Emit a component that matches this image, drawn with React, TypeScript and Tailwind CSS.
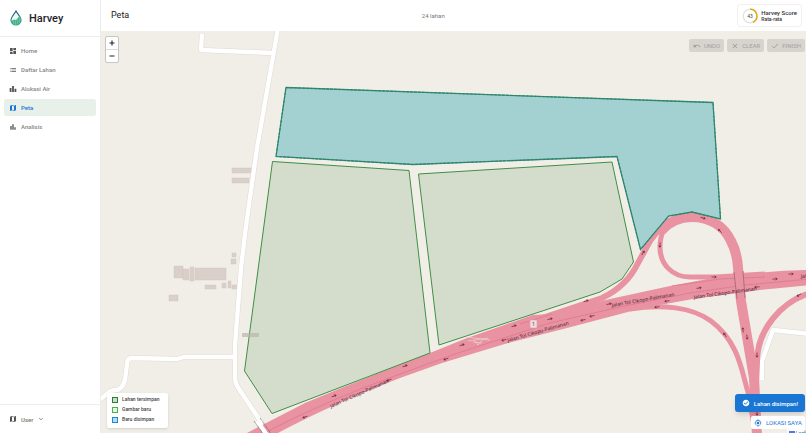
import type { ComponentType } from 'react';
import {
  MdBarChart,
  MdCheck,
  MdCheckCircle,
  MdClose,
  MdDashboard,
  MdExpandMore,
  MdLeaderboard,
  MdList,
  MdMap,
  MdMyLocation,
  MdUndo,
} from 'react-icons/md';

type Icon = ComponentType<{ className?: string }>;

const navItems: { label: string; icon: Icon; active?: boolean }[] = [
  { label: 'Home', icon: MdDashboard },
  { label: 'Daftar Lahan', icon: MdList },
  { label: 'Alokasi Air', icon: MdLeaderboard },
  { label: 'Peta', icon: MdMap, active: true },
  { label: 'Analisis', icon: MdBarChart },
];

const tools: { label: string; icon: Icon }[] = [
  { label: 'UNDO', icon: MdUndo },
  { label: 'CLEAR', icon: MdClose },
  { label: 'FINISH', icon: MdCheck },
];

const legend = [
  { label: 'Lahan tersimpan', swatch: 'border-solid border-[#2e7d32] bg-[#c3dfc5]' },
  { label: 'Gambar baru', swatch: 'border-dashed border-[#4caf50] bg-[#e6f5e7]' },
  { label: 'Baru disimpan', swatch: 'border-dashed border-[#1e88d2] bg-[#b5def8]' },
];

// Direction arrows along the motorway: x, y, angle in degrees
const arrows = [
  [334, 396, -21], [305, 417, 159], [405, 366, -20], [389, 380, 159], [446, 359, 163],
  [462, 345, -17], [514, 326, -17], [504, 340, 165], [550, 319, -14], [586, 301, -17],
  [583, 320, 168], [592, 316, 168], [609, 304, -12], [643, 253, -58], [660, 245, 95],
  [703, 218, 14], [720, 231, 225], [714, 277, 0], [699, 288, -9], [667, 301, 172],
  [657, 307, 172], [757, 287, 176], [775, 279, -4], [791, 274, -2], [799, 295, 150],
  [743, 330, 264], [747, 337, 84], [757, 355, 92], [725, 335, 235], [757, 413, 90],
];

const roadLabels = [
  [331, 408, -24], [508, 342, -16], [612, 307, -10], [694, 299, -8], [801, 278, -3],
];

const buildings = [
  [232, 168, 20, 5], [232, 178, 17, 5], [232, 253, 4, 4], [231, 259, 5, 5],
  [174, 266, 9, 12], [183, 269, 6, 11], [190, 267, 4, 14], [195, 268, 31, 12],
  [205, 285, 11, 4], [222, 283, 4, 5], [228, 281, 3, 7], [232, 285, 5, 4],
  [169, 295, 9, 6],
];

const localRoads = [
  'M278 28 L257 148 L246 226 L241 268 L235 345 L235 378 Q235 383 239 389 L269 434',
  'M202 34 L201 50 L273 53',
  'M234 357 L184 357 L177 359 L132 358 Q127 358 127 364 L125 380 Q122 390 116 390 Q111 390 107 394 L97 402',
  'M762 380 L762 361 L773 330 L810 334',
];

const ramps = [
  { d: 'M470 341 L536 320 L602 298 Q627 286 638 263 L650 241 Q660 227 670 220', w: 6 },
  { d: 'M674 218 Q660 228 660 247 C660 264 672 277 690 277 L716 277 L765 274', w: 5 },
  { d: 'M661 231 Q673 217 692 217 C710 217 724 226 731 241 Q737 252 738 268 L741 301 L754 378 L757 436', w: 10 },
  { d: 'M630 309 C662 304 692 307 711 321 C740 343 742 374 748 392 L756 436', w: 5 },
  { d: 'M810 293 C781 302 757 330 757 362 L755 395', w: 6 },
];

function Logo() {
  return (
    <svg viewBox="0 0 24 32" className="h-4 w-3" aria-hidden="true">
      <defs>
        <linearGradient id="drop" x1="0" y1="0" x2="0" y2="1">
          <stop offset="0" stopColor="#24507f" />
          <stop offset="1" stopColor="#24a47a" />
        </linearGradient>
      </defs>
      <path d="M12 2 C9 8 2 14 2 20.5 A10 9.5 0 0 0 22 20.5 C22 14 15 8 12 2Z" fill="#eef8f6" stroke="url(#drop)" strokeWidth="2.2" />
      <path d="M3 22 L8 19 L12 20 L20 11 L21.5 18 Q22 30 12 30 Q4 29 3 22Z" fill="#45b18b" />
      <path d="M7 21 V27 M11 21 V29 M15 18 V28 M19 15 V25" stroke="#a5dcc8" strokeWidth="0.8" />
    </svg>
  );
}

function Sidebar() {
  return (
    <aside className="flex w-[101px] shrink-0 flex-col border-r border-[#ececec] bg-white">
      <div className="flex h-[37px] items-center gap-[7px] border-b border-[#ececec] px-[10px]">
        <Logo />
        <span className="text-[11px] font-medium leading-none text-[#1f2428]">Harvey</span>
      </div>
      <nav className="flex flex-1 flex-col gap-[2px] px-1 pt-[5px]">
        {navItems.map(({ label, icon: ItemIcon, active }) => (
          <a
            key={label}
            href="#"
            aria-current={active ? 'page' : undefined}
            className={`flex h-[17px] items-center gap-1 rounded-[2px] px-[5px] text-[6px] font-medium ${
              active ? 'bg-[#e8f1e9] text-[#1976d2]' : 'text-[#858585]'
            }`}
          >
            <ItemIcon className={`size-2 ${active ? '' : 'text-[#555555]'}`} />
            {label}
          </a>
        ))}
      </nav>
      <div className="border-t border-[#ececec] px-1 pt-[6px] pb-[6px]">
        <button type="button" className="flex h-4 items-center gap-1 px-[5px] text-[6px] font-medium text-[#777777]">
          <MdMap className="size-2 text-[#555555]" />
          User
          <MdExpandMore className="size-2" />
        </button>
      </div>
    </aside>
  );
}

function Header() {
  return (
    <header className="flex h-[31px] shrink-0 items-center justify-between bg-white pr-1 pl-[10px]">
      <h1 className="text-[9px] font-normal text-[#222222]">Peta</h1>
      <span className="text-[6px] text-[#777777]">24 lahan</span>
      <div className="flex h-[23px] items-center gap-[3px] rounded-[3px] border border-[#f1f1f1] px-1">
        <svg viewBox="0 0 16 16" className="size-4" role="img" aria-label="43">
          <circle cx="8" cy="8" r="6.8" fill="none" stroke="#e3e3e3" strokeWidth="1.3" />
          <path d="M8 1.2 A6.8 6.8 0 0 1 10.9 14.2" fill="none" stroke="#e0ad15" strokeWidth="1.5" />
          <text x="8" y="9.7" textAnchor="middle" className="fill-[#444444] text-[5px]">43</text>
        </svg>
        <div className="flex flex-col text-[#333333]">
          <span className="text-[6px] font-medium leading-[7px]">Harvey Score</span>
          <span className="text-[5px] font-medium leading-[6px]">Rata-rata</span>
        </div>
      </div>
    </header>
  );
}

function MapCanvas() {
  return (
    <svg
      viewBox="101 31 705 402"
      preserveAspectRatio="xMinYMin slice"
      className="absolute inset-0 size-full bg-[#f1eee8]"
      role="img"
      aria-label="Peta lahan"
    >
      <g fill="#d9d0c9">
        {buildings.map(([x, y, w, h]) => (
          <rect key={`${x}-${y}`} x={x} y={y} width={w} height={h} stroke="#cfc4bc" strokeWidth="0.4" />
        ))}
      </g>
      <g fill="none" strokeLinejoin="round">
        {localRoads.map((d) => <path key={d} d={d} stroke="#dedad5" strokeWidth="5.4" />)}
        {localRoads.map((d) => <path key={d} d={d} stroke="#ffffff" strokeWidth="4.4" />)}
      </g>
      <g fill="none" stroke="#e892a2">
        {ramps.map(({ d, w }) => <path key={d} d={d} strokeWidth={w} />)}
      </g>
      <path
        d="M245 434 L305 403 Q360 380 430 353 L467 338 L533 315 L550 314 L610 299 L670 286 L713 278 Q760 271 810 270 L810 285 L760 290 L693 299 L643 308 L567 328 L508 343 L442 363 L400 378 Q330 405 276 434Z"
        fill="#e892a2"
      />
      <path
        d="M262 434 Q330 399 400 374 L455 354 L550 323 L620 307 L690 293 L745 285 L810 279 M672 286 L720 279 L765 277 M552 314 L520 324"
        fill="none"
        stroke="#dc6f88"
        strokeWidth="0.6"
      />
      <path d="M738 266 L741 301" fill="none" stroke="#e892a2" strokeWidth="9" />
      <path d="M734 272 L737 299 M743 271 L745 298" fill="none" stroke="#8c5361" strokeWidth="0.6" />
      <path d="M257 421 L267 435" stroke="#ffffff" strokeWidth="4.4" />
      <path d="M260 418 L272 435 M254 421 L264 435" stroke="#666666" strokeWidth="0.8" strokeDasharray="1 0.6" />

      <g strokeWidth="1">
        <path d="M272.5 161.5 L409 170.5 L430 353 L272 413.5 L244.5 371Z" fill="#2e7d32" fillOpacity="0.15" stroke="#3f8f45" />
        <path d="M418.5 174 L612 162 L633.5 262 L622 279 L600 292 L439 345Z" fill="#2e7d32" fillOpacity="0.15" stroke="#3f8f45" />
        <path
          d="M286 87.5 L713 102.5 L720.5 219 L692 212 L668.5 216 L640.5 249.5 L617 156.5 L413 164.5 L276 156.5Z"
          fill="#a3d1d1"
          stroke="#3f9483"
          strokeWidth="1.3"
        />
        <path
          d="M286 87.5 L713 102.5 L720.5 219 L692 212 L668.5 216 L640.5 249.5 L617 156.5 L413 164.5 L276 156.5Z"
          fill="none"
          stroke="#2a8060"
          strokeWidth="1"
          strokeDasharray="3 1"
        />
      </g>
      <rect x="242" y="333" width="17" height="4" fill="#b9b5ab" fillOpacity="0.7" />

      <g fill="none" stroke="#6d2238" strokeWidth="0.7">
        {arrows.map(([x, y, angle]) => (
          <path key={`${x}-${y}`} d="M-2.5 0 H2 M0.6 -1.1 L2.3 0 L0.6 1.1" transform={`translate(${x} ${y}) rotate(${angle})`} />
        ))}
      </g>
      <g className="fill-[#44202b] font-['Noto_Sans',sans-serif] text-[5px]">
        {roadLabels.map(([x, y, angle]) => (
          <text key={x} transform={`translate(${x} ${y}) rotate(${angle})`}>Jalan Tol Cikopo-Palimanan</text>
        ))}
      </g>
      <rect x="530" y="320" width="7" height="8" rx="1" fill="#f2dcdf" stroke="#d6a3ad" strokeWidth="0.6" />
      <text x="533.5" y="326" textAnchor="middle" className="fill-[#555555] font-['Noto_Sans',sans-serif] text-[6px]">1</text>
      <g fill="none" stroke="#e9cfd0" strokeWidth="0.8">
        <path d="M466 337 L490 340 M468 341 L488 338 M473 342 L482 343 M474 340 L478 345 L483 339" />
      </g>
    </svg>
  );
}

function MapPanel() {
  return (
    <main className="relative flex-1 overflow-hidden">
      <MapCanvas />

      <div className="absolute top-[5px] left-1 flex flex-col rounded-[2px] border border-[#c9c6c1] bg-white text-[#222222]">
        <button type="button" aria-label="Perbesar" className="flex h-[13px] w-3 items-center justify-center border-b border-[#dddddd]">
          <svg viewBox="0 0 6 6" className="size-[6px]"><path d="M3 0.5 V5.5 M0.5 3 H5.5" stroke="currentColor" strokeWidth="1.1" /></svg>
        </button>
        <button type="button" aria-label="Perkecil" className="flex h-3 w-3 items-center justify-center">
          <svg viewBox="0 0 6 6" className="size-[6px]"><path d="M0.5 3 H5.5" stroke="currentColor" strokeWidth="1" /></svg>
        </button>
      </div>

      <div className="absolute top-2 right-px flex gap-[3px]">
        {tools.map(({ label, icon: ToolIcon }) => (
          <button
            key={label}
            type="button"
            disabled
            className="flex h-[13px] items-center gap-[3px] rounded-[2px] bg-[#d7d4cf] px-[4px] text-[6px] text-[#a3a19d]"
          >
            <ToolIcon className="size-2 text-[#99968f]" />
            {label}
          </button>
        ))}
      </div>

      <ul className="absolute bottom-[5px] left-[6px] flex w-[61px] flex-col rounded-[2px] bg-white px-[5px] pt-[2px] pb-[3px] shadow-sm">
        {legend.map(({ label, swatch }) => (
          <li key={label} className="flex h-[10px] items-center gap-1 text-[5px] font-medium whitespace-nowrap text-[#444444]">
            <span className={`size-[6px] shrink-0 border ${swatch}`} />
            {label}
          </li>
        ))}
      </ul>

      <a href="#" className="absolute -right-[7px] bottom-[-4px] flex items-center gap-px bg-white/80 px-[2px] text-[5px] leading-[8px] text-[#2878a8]">
        <svg viewBox="0 0 6 4" className="h-1 w-[6px] shrink-0" aria-hidden="true">
          <path fill="#4c7be1" d="M0 0h6v2H0z" />
          <path fill="#ffd500" d="M0 2h6v2H0z" />
        </svg>
        Leaflet
      </a>
      <div className="absolute right-px bottom-[4px] flex flex-col items-end gap-1">
        <div role="status" className="flex h-[18px] items-center gap-1 rounded-[3px] bg-[#1976d2] px-[7px] text-[6px] font-medium text-white shadow-md">
          <MdCheckCircle className="size-2" />
          Lahan disimpan!
        </div>
        <button type="button" className="flex h-[13px] items-center gap-1 rounded-[2px] bg-white px-[3px] text-[6px] text-[#1976d2]">
          <MdMyLocation className="size-2" />
          LOKASI SAYA
        </button>
      </div>
    </main>
  );
}

export default function App() {
  return (
    <div className="flex h-screen bg-white font-[Roboto,sans-serif]">
      <Sidebar />
      <div className="flex min-w-0 flex-1 flex-col">
        <Header />
        <MapPanel />
      </div>
    </div>
  );
}
